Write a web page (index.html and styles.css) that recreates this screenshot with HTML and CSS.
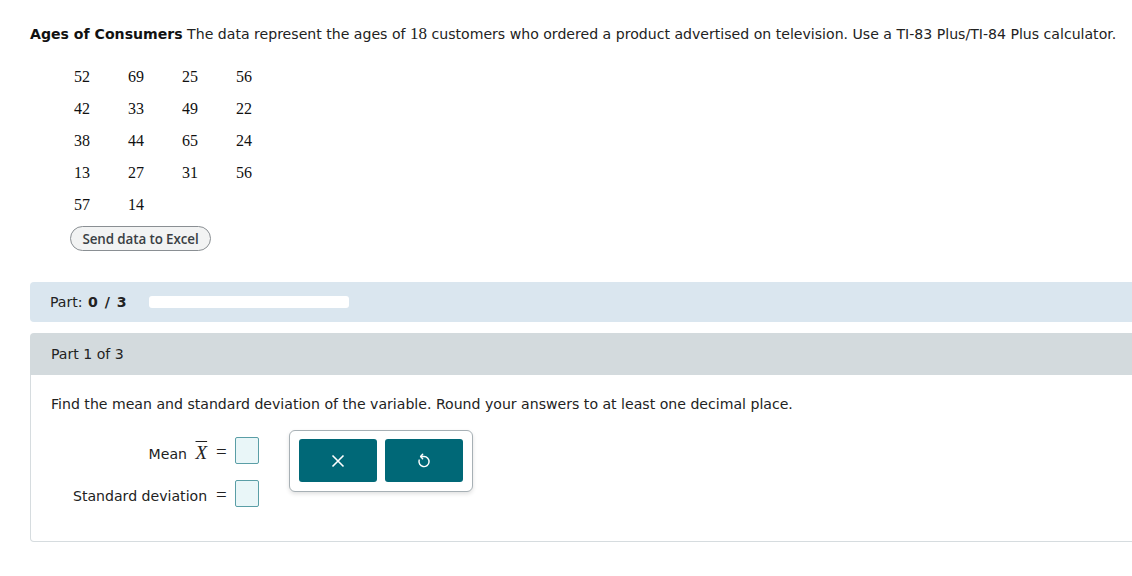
FILE: index.html
```html
<!DOCTYPE html>
<html>
<head>
<meta charset="utf-8">
<link rel="stylesheet" href="styles.css">
</head>
<body>
<div class="page">
  <p class="intro"><b>Ages of Consumers</b> The data represent the ages of <span class="num">18</span> customers who ordered a product advertised on television. Use a TI-83 Plus/TI-84 Plus calculator.</p>
  <div class="data">
    <span>52</span><span>69</span><span>25</span><span>56</span>
    <span>42</span><span>33</span><span>49</span><span>22</span>
    <span>38</span><span>44</span><span>65</span><span>24</span>
    <span>13</span><span>27</span><span>31</span><span>56</span>
    <span>57</span><span>14</span>
  </div>
  <button class="excel">Send data to Excel</button>

  <div class="progress">
    <span class="plabel">Part: <b>0 / 3</b></span>
    <span class="pbar"></span>
  </div>

  <div class="part">
    <div class="part-head">Part 1 of 3</div>
    <div class="part-body">
      <p class="question">Find the mean and standard deviation of the variable. Round your answers to at least one decimal place.</p>
      <div class="answer">
        <div class="fields">
          <div class="row"><span class="lbl">Mean <span class="xbar">X</span></span><span class="eq">=</span><span class="box"></span></div>
          <div class="row"><span class="lbl">Standard deviation</span><span class="eq">=</span><span class="box"></span></div>
        </div>
        <div class="tools">
          <button class="tbtn" aria-label="clear">
            <svg width="16" height="16" viewBox="0 0 16 16"><path d="M2.5 2.5 L13.5 13.5 M13.5 2.5 L2.5 13.5" stroke="#fff" stroke-width="1.6" fill="none"/></svg>
          </button>
          <button class="tbtn" aria-label="undo">
            <svg width="16" height="18" viewBox="0 0 14 16"><path d="M4.2 4 H7 A4.5 4.5 0 1 1 2.7 7.2" stroke="#fff" stroke-width="1.3" fill="none" stroke-linecap="round"/><path d="M5.8 2 L4 4 L5.8 6" stroke="#fff" stroke-width="1.3" fill="none" stroke-linecap="round" stroke-linejoin="round"/></svg>
          </button>
        </div>
      </div>
    </div>
  </div>
</div>
</body>
</html>
```
FILE: styles.css
```css
html, body {
  margin: 0;
  padding: 0;
  background: #fff;
  overflow: hidden;
}
.page {
  padding: 24px 0 0 30px;
  font-family: "DejaVu Sans", Verdana, sans-serif;
  font-size: 14.1px;
  color: #222;
}
.intro {
  margin: 0;
  line-height: 20px;
  white-space: nowrap;
}
.intro b { color: #111; }
.num {
  font-family: "Liberation Serif", serif;
  font-size: 17px;
}
.data {
  display: grid;
  grid-template-columns: repeat(4, 54px);
  grid-auto-rows: 32px;
  margin: 17px 0 0 44px;
  font-family: "Liberation Serif", serif;
  font-size: 16px;
  color: #111;
  align-items: center;
}
.excel {
  display: block;
  margin: 5px 0 0 40px;
  width: 141px;
  height: 25px;
  border: 1px solid #8a8f93;
  border-radius: 13px;
  background: #f2f3f3;
  font-family: "Open Sans", sans-serif;
  font-weight: 600;
  font-size: 13.4px;
  color: #3a3f44;
  padding: 0;
  letter-spacing: -0.1px;
}
.progress {
  margin-top: 31px;
  height: 40px;
  background: #dae6ef;
  border-radius: 4px 0 0 4px;
  display: flex;
  align-items: center;
  padding-left: 20px;
  margin-right: -4px;
}
.plabel { color: #222; }
.plabel b { margin-left: 1px; word-spacing: 2px; }
.pbar {
  margin-left: 22px;
  width: 200px;
  height: 12px;
  background: #fff;
  border-radius: 3px;
}
.part {
  margin-top: 11px;
  margin-right: -4px;
}
.part-head {
  height: 42px;
  background: #d3dadd;
  border-radius: 4px 0 0 0;
  display: flex;
  align-items: center;
  padding-left: 21px;
  color: #222;
}
.part-body {
  border: 1px solid #d6dcdf;
  border-top: none;
  border-radius: 0 0 0 4px;
  height: 166px;
  padding-left: 20px;
}
.question {
  margin: 0;
  padding-top: 19px;
  line-height: 20px;
}
.answer {
  display: flex;
  margin-top: 16px;
  align-items: flex-start;
}
.fields {
  display: flex;
  flex-direction: column;
  gap: 16px;
  padding-top: 7px;
  margin-left: 22px;
}
.row {
  display: flex;
  align-items: center;
  justify-content: flex-end;
  height: 27px;
}
.lbl { color: #222; padding-top: 4px; }
.xbar {
  font-family: "Liberation Serif", serif;
  font-style: italic;
  font-size: 19px;
  text-decoration: overline;
  margin-left: 4px;
}
.eq {
  font-family: "Liberation Serif", serif;
  font-size: 19px;
  padding-top: 2px;
  margin: 0 8px 0 9px;
}
.box {
  display: block;
  width: 22px;
  height: 25px;
  border: 1px solid #5a9ea6;
  border-radius: 2px;
  background: #e9f6f8;
}
.tools {
  margin-left: 30px;
  display: flex;
  gap: 8px;
  padding: 8px 9px 9px 9px;
  border: 1px solid #a7b0b5;
  border-radius: 6px;
  box-shadow: 0 2px 4px rgba(0,0,0,0.12);
  background: #fff;
}
.tbtn {
  width: 78px;
  height: 43px;
  border: none;
  border-radius: 3px;
  background: #006877;
  display: flex;
  align-items: center;
  justify-content: center;
  padding: 0;
}
```
